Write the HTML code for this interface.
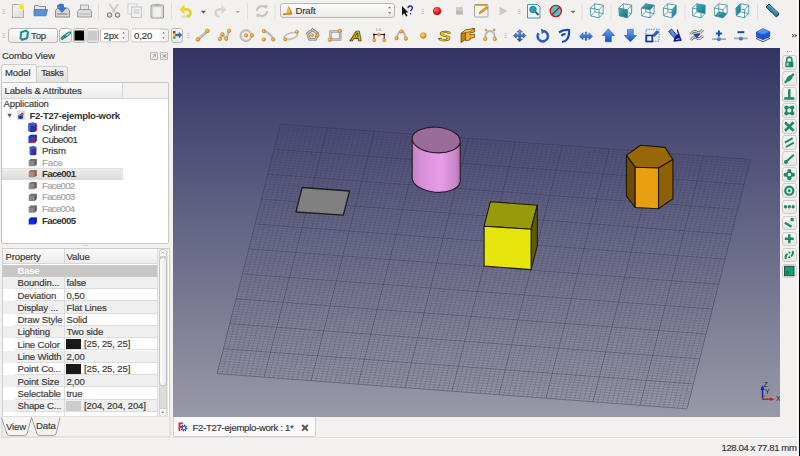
<!DOCTYPE html>
<html><head><meta charset="utf-8">
<style>
*{box-sizing:border-box;margin:0;padding:0}
html,body{width:800px;height:456px;overflow:hidden;background:#f2f1f0;font-family:"Liberation Sans",sans-serif;color:#3c3c3c}
.a{position:absolute}
.t{position:absolute;white-space:pre;font-size:9.6px;letter-spacing:-0.15px;line-height:12px;-webkit-text-stroke:0.18px currentColor}
.b{font-weight:bold;letter-spacing:-0.3px;-webkit-text-stroke:0}
.g{color:#a3a3a3}
.row{position:absolute;left:15px;width:142px;height:12.2px;border-bottom:1px solid #dedede}
.ic{position:absolute}
</style></head><body>
<svg class="a" style="left:0;top:0" width="800" height="48" viewBox="0 0 800 48">
<defs>
<linearGradient id="pg" x1="0" y1="0" x2="1" y2="1"><stop offset="0" stop-color="#fafafa"/><stop offset="1" stop-color="#d8d8d8"/></linearGradient>
<linearGradient id="btn" x1="0" y1="0" x2="0" y2="1"><stop offset="0" stop-color="#fdfdfd"/><stop offset="1" stop-color="#ebe9e6"/></linearGradient>
<linearGradient id="teal" x1="0" y1="0" x2="1" y2="1"><stop offset="0" stop-color="#48b4c4"/><stop offset="1" stop-color="#0c6c7c"/></linearGradient>
<linearGradient id="blu" x1="0" y1="0" x2="0" y2="1"><stop offset="0" stop-color="#6aa8f0"/><stop offset="1" stop-color="#1050c0"/></linearGradient>
<radialGradient id="red" cx="0.4" cy="0.35" r="0.7"><stop offset="0" stop-color="#ff7070"/><stop offset="0.6" stop-color="#e41b1b"/><stop offset="1" stop-color="#b00000"/></radialGradient>
<radialGradient id="dot" cx="0.35" cy="0.35" r="0.7"><stop offset="0" stop-color="#ffd070"/><stop offset="1" stop-color="#e08a00"/></radialGradient>
</defs>
<!-- grips row1 -->
<g stroke="#bcbab6" stroke-width="0.8"><path d="M2.5 9.5h2.5M2.5 11.5h2.5M2.5 13.5h2.5"/></g>
<!-- New -->
<rect x="12.5" y="4.5" width="11" height="13" fill="url(#pg)" stroke="#b0b0b0"/>
<circle cx="21.5" cy="7" r="3.4" fill="#ffff80" opacity="0.6"/><circle cx="21.5" cy="7" r="2.4" fill="#f0e830"/>
<!-- Open -->
<path d="M34.5 5.5h4l1 1h6v8h-11z" fill="#e8e8e8" stroke="#8c8c8c"/>
<path d="M34 9.5h13.5l-1.5 6.3h-12z" fill="#5a8fd0" stroke="#3a6aa8" stroke-width="0.7"/>
<!-- Save -->
<path d="M55.5 10.5l2-2.5h10l2 2.5v6.5h-14z" fill="#d8d8d8" stroke="#8a8a8a"/>
<rect x="57" y="13" width="10.5" height="2" fill="#a8a8a8"/>
<path d="M57.5 5.5c1.5-1.5 4-2 6-1l0 3.5 2.5 0-4 4.5-4-4.5 2.5 0 0-1.5c-1 0-2 0.2-3 1z" fill="#3a78cc" stroke="#1c4c98" stroke-width="0.5"/>
<!-- Print -->
<rect x="80.5" y="5" width="8" height="6" fill="#e4e4e4" stroke="#a8a8a8"/>
<path d="M77.5 11.5l1.5-2h11l1.5 2v5.5h-14z" fill="#dcdcdc" stroke="#9a9a9a"/>
<rect x="79" y="13.5" width="10.5" height="1" fill="#b4b4b4"/>
<!-- sep -->
<path d="M98.5 3v16" stroke="#e2e0dc"/>
<!-- Cut -->
<g fill="none" stroke="#c8c8c8" stroke-width="1.6"><path d="M109.5 4l5.5 8.5M118 4l-5.5 8.5"/></g><g fill="none" stroke="#8a8a8a" stroke-width="1.3"><circle cx="109.5" cy="15" r="2.1"/><circle cx="117.5" cy="15" r="2.1"/></g>
<!-- Copy -->
<rect x="128" y="4" width="9" height="10" fill="#f4f4f4" stroke="#d0d0d0"/>
<rect x="131.5" y="7" width="10" height="10.5" fill="#f0f0f0" stroke="#c4c4c4"/>
<rect x="133.5" y="9" width="6" height="5" fill="#dcdcdc"/>
<!-- Paste -->
<rect x="151" y="5" width="12.5" height="13" rx="1" fill="#dcdcdc" stroke="#9a9a9a"/>
<path d="M152.8 6.8h9v9l-2 1.5h-7z" fill="#f0f0f0" stroke="#c0c0c0" stroke-width="0.5"/>
<rect x="154.5" y="3.8" width="5.5" height="2.4" rx="0.8" fill="#b0b0b0"/>
<!-- sep -->
<path d="M171.5 3v16" stroke="#e2e0dc"/>
<!-- Undo -->
<ellipse cx="186" cy="16.5" rx="5" ry="1.5" fill="#d8d6d2" opacity="0.7"/>
<path d="M183.5 9.5c4.5-1 7 1 7 3.5s-2 3.5-4 3.2" fill="none" stroke="#e6d020" stroke-width="2.6"/>
<path d="M179.5 9.5l5-5v10z" fill="#ecd828"/>
<path d="M201 10.8h5l-2.5 2.7z" fill="#555"/>
<!-- Redo faded -->
<path d="M222.5 9.5c-4.5-1-7 1-7 3.5s2 3.5 4 3.2" fill="none" stroke="#d4d4d4" stroke-width="2.6"/>
<path d="M226.5 9.5l-5-5v10z" fill="#d8d8d8"/>
<path d="M235.6 11h4.4l-2.2 2.3z" fill="#a8a8a8"/>
<path d="M247.5 3v16" stroke="#e2e0dc"/>
<!-- Refresh -->
<g fill="none" stroke="#c4c4c4" stroke-width="2"><path d="M257 11a5 5 0 0 1 9-3"/><path d="M267 11a5 5 0 0 1-9 3"/></g>
<path d="M264 5l3.5 0 0 4z" fill="#c4c4c4"/><path d="M260 17l-3.5 0 0-4z" fill="#c4c4c4"/>
<path d="M275 3v16" stroke="#e2e0dc"/>
<!-- Draft combo -->
<rect x="280.5" y="3.5" width="114" height="14" rx="2.5" fill="url(#btn)" stroke="#b9b7b3"/>
<path d="M283 13.5l9-0.5 0 1.5-9 0.5z" fill="#c47a10"/><path d="M286 13l2.5-7.5 3.5 7.5z" fill="#e8c040"/><path d="M288.5 5.5l3.5 7.5h-1.5z" fill="#b08020"/>
<path d="M388 8.2l1.6-1.8 1.6 1.8z" fill="#707070"/><path d="M388 12.3l1.6 1.8 1.6-1.8z" fill="#707070"/>
<!-- WhatsThis -->
<path d="M402 6l0 9.5 2.2-2.2 2 3.2 1.3-0.8-1.9-3.1 2.9-0.2z" fill="#111"/>
<path d="M408 8.2c0-1.5 1-2.2 2.2-2.2s2.2 0.8 2.2 2c0 1.6-1.8 1.8-1.8 3.3" fill="none" stroke="#1a2aa8" stroke-width="1.3"/><circle cx="410.6" cy="13.8" r="0.8" fill="#1a2aa8"/>
<!-- grip -->
<g stroke="#c4c2be" stroke-width="0.8"><path d="M421.5 9.5h2.5M421.5 11.5h2.5M421.5 13.5h2.5"/></g>
<!-- record -->
<circle cx="437" cy="11" r="4.1" fill="url(#red)"/>
<!-- stop -->
<rect x="456" y="7" width="7" height="7.4" fill="#cdcdcd"/><rect x="456" y="11" width="7" height="3.4" fill="#b8b8b8"/>
<!-- macro edit -->
<rect x="474.5" y="4.5" width="13.5" height="12.5" rx="1" fill="#f6f4ea" stroke="#a8a8a0"/>
<rect x="475" y="4" width="12.5" height="1.8" fill="#b8a040"/>
<path d="M479 14l1-2.5 6.5-5 1.5 1.5-6.5 5z" fill="#e8a030" stroke="#a06010" stroke-width="0.5"/>
<!-- play -->
<path d="M499.5 6.5l8 4.5-8 4.5z" fill="#cacaca"/>
<g stroke="#c4c2be" stroke-width="0.8"><path d="M518 9.5h2.5M518 11.5h2.5M518 13.5h2.5"/></g>
<!-- view fit -->
<path d="M527.5 4.5h10l2.5 2.5v11h-12.5z" fill="#f4f8f8" stroke="#4a9aa8"/>
<circle cx="533" cy="9.5" r="3.3" fill="#2aa0b8" stroke="#106878" stroke-width="0.6"/>
<path d="M535.5 12l3 3" stroke="#106878" stroke-width="1.8"/>
<!-- draw style -->
<circle cx="555.8" cy="11" r="5.2" fill="#40c8d8"/>
<circle cx="555.8" cy="11" r="5.6" fill="none" stroke="#c41818" stroke-width="1.4"/>
<path d="M552 14.8l7.6-7.6" stroke="#c41818" stroke-width="1.4"/>
<path d="M570.6 10.8h5l-2.5 2.7z" fill="#777"/>
<path d="M582 3v16" stroke="#e2e0dc"/>
<!-- cubes -->
<path d="M590.3 8.0L599.0 9.8L599.0 17.8L590.8 15.9zM590.3 8.0L599.0 9.8L603.2 5.2L594.8 3.8zM599.0 9.8L603.2 5.2L603.0 13.6L599.0 17.8z" fill="#fff" fill-opacity="0.85"/><path d="M590.3 8.0L599.0 9.8L599.0 17.8L590.8 15.9zM594.8 3.8L603.2 5.2L603.0 13.6L594.8 11.8zM590.3 8.0L594.8 3.8M599.0 9.8L603.2 5.2M599.0 17.8L603.0 13.6M590.8 15.9L594.8 11.8" fill="none" stroke="#3a8e9c" stroke-width="0.85"/><path d="M618.8 8.0L627.5 9.8L627.5 17.8L619.3 15.9zM618.8 8.0L627.5 9.8L631.7 5.2L623.3 3.8zM627.5 9.8L631.7 5.2L631.5 13.6L627.5 17.8z" fill="#fff" fill-opacity="0.85"/><path d="M618.8 8.0L627.5 9.8L627.5 17.8L619.3 15.9z" fill="url(#teal)"/><path d="M618.8 8.0L627.5 9.8L627.5 17.8L619.3 15.9zM623.3 3.8L631.7 5.2L631.5 13.6L623.3 11.8zM618.8 8.0L623.3 3.8M627.5 9.8L631.7 5.2M627.5 17.8L631.5 13.6M619.3 15.9L623.3 11.8" fill="none" stroke="#3a8e9c" stroke-width="0.85"/><path d="M641.3 8.0L650.0 9.8L650.0 17.8L641.8 15.9zM641.3 8.0L650.0 9.8L654.2 5.2L645.8 3.8zM650.0 9.8L654.2 5.2L654.0 13.6L650.0 17.8z" fill="#fff" fill-opacity="0.85"/><path d="M641.3 8.0L650.0 9.8L654.2 5.2L645.8 3.8z" fill="url(#teal)"/><path d="M641.3 8.0L650.0 9.8L650.0 17.8L641.8 15.9zM645.8 3.8L654.2 5.2L654.0 13.6L645.8 11.8zM641.3 8.0L645.8 3.8M650.0 9.8L654.2 5.2M650.0 17.8L654.0 13.6M641.8 15.9L645.8 11.8" fill="none" stroke="#3a8e9c" stroke-width="0.85"/><path d="M663.3 8.0L672.0 9.8L672.0 17.8L663.8 15.9zM663.3 8.0L672.0 9.8L676.2 5.2L667.8 3.8zM672.0 9.8L676.2 5.2L676.0 13.6L672.0 17.8z" fill="#fff" fill-opacity="0.85"/><path d="M672.0 9.8L676.2 5.2L676.0 13.6L672.0 17.8z" fill="url(#teal)"/><path d="M663.3 8.0L672.0 9.8L672.0 17.8L663.8 15.9zM667.8 3.8L676.2 5.2L676.0 13.6L667.8 11.8zM663.3 8.0L667.8 3.8M672.0 9.8L676.2 5.2M672.0 17.8L676.0 13.6M663.8 15.9L667.8 11.8" fill="none" stroke="#3a8e9c" stroke-width="0.85"/><path d="M692.3 8.0L701.0 9.8L701.0 17.8L692.8 15.9zM692.3 8.0L701.0 9.8L705.2 5.2L696.8 3.8zM701.0 9.8L705.2 5.2L705.0 13.6L701.0 17.8z" fill="#fff" fill-opacity="0.85"/><path d="M696.8 3.8L705.2 5.2L705.0 13.6L696.8 11.8z" fill="url(#teal)"/><path d="M692.3 8.0L701.0 9.8L701.0 17.8L692.8 15.9zM696.8 3.8L705.2 5.2L705.0 13.6L696.8 11.8zM692.3 8.0L696.8 3.8M701.0 9.8L705.2 5.2M701.0 17.8L705.0 13.6M692.8 15.9L696.8 11.8" fill="none" stroke="#3a8e9c" stroke-width="0.85"/><path d="M714.3 8.0L723.0 9.8L723.0 17.8L714.8 15.9zM714.3 8.0L723.0 9.8L727.2 5.2L718.8 3.8zM723.0 9.8L727.2 5.2L727.0 13.6L723.0 17.8z" fill="#fff" fill-opacity="0.85"/><path d="M714.8 15.9L723.0 17.8L727.0 13.6L718.8 11.8z" fill="url(#teal)"/><path d="M714.3 8.0L723.0 9.8L723.0 17.8L714.8 15.9zM718.8 3.8L727.2 5.2L727.0 13.6L718.8 11.8zM714.3 8.0L718.8 3.8M723.0 9.8L727.2 5.2M723.0 17.8L727.0 13.6M714.8 15.9L718.8 11.8" fill="none" stroke="#3a8e9c" stroke-width="0.85"/><path d="M735.9 8.0L744.6 9.8L744.6 17.8L736.4 15.9zM735.9 8.0L744.6 9.8L748.8 5.2L740.4 3.8zM744.6 9.8L748.8 5.2L748.6 13.6L744.6 17.8z" fill="#fff" fill-opacity="0.85"/><path d="M735.9 8.0L740.4 3.8L740.4 11.8L736.4 15.9z" fill="url(#teal)"/><path d="M735.9 8.0L744.6 9.8L744.6 17.8L736.4 15.9zM740.4 3.8L748.8 5.2L748.6 13.6L740.4 11.8zM735.9 8.0L740.4 3.8M744.6 9.8L748.8 5.2M744.6 17.8L748.6 13.6M736.4 15.9L740.4 11.8" fill="none" stroke="#3a8e9c" stroke-width="0.85"/>
<path d="M611 3v16" stroke="#e2e0dc"/>
<path d="M685 3v16" stroke="#e2e0dc"/>
<path d="M757.5 3v16" stroke="#e2e0dc"/>
<!-- measure -->
<path d="M766 7l3-3 10 9.5-3 3z" fill="#2a90a8" stroke="#102c38" stroke-width="0.9"/><path d="M767.5 6.5l1.5-1.5 8.5 8" stroke="#70d0e0" stroke-width="0.7" fill="none"/>
<path d="M776 16.5l3-3v1.5l-2.5 2.5z" fill="#1a4050"/>
<!-- grips row2 -->
<g stroke="#bcbab6" stroke-width="0.8"><path d="M2.5 33.5h2.5M2.5 35.5h2.5M2.5 37.5h2.5"/></g>
<!-- Top button -->
<rect x="8.5" y="28.5" width="49" height="14" rx="2.5" fill="url(#btn)" stroke="#bbb9b5"/>
<path d="M21.2 32.3l4.8-1.6 2 1.6-1 5.8-4.8 1.6-1.6-1.6z" fill="none" stroke="#1a9aa0" stroke-width="2.1"/>
<path d="M21.2 32.3l4.8-1.6 2 1.6-1 5.8-4.8 1.6-1.6-1.6z" fill="none" stroke="#0a5a60" stroke-width="0.6" stroke-dasharray="0.8 1.2"/>
<!-- link -->
<rect x="59.5" y="28.5" width="12" height="14" rx="2.5" fill="url(#btn)" stroke="#bbb9b5"/>
<path d="M62.2 38.2l3.8-2.6" stroke="#0e6a5c" stroke-width="3.2" stroke-linecap="round"/><path d="M62.2 38.2l3.8-2.6" stroke="#2aa898" stroke-width="2" stroke-linecap="round"/>
<path d="M65.5 35.8l4-2.8" stroke="#0e6a5c" stroke-width="3.2" stroke-linecap="round"/><path d="M65.5 35.8l4-2.8" stroke="#3cc0b0" stroke-width="2" stroke-linecap="round"/><path d="M66.3 35.2l2.6-1.8" stroke="#e0f8f0" stroke-width="0.7"/>
<!-- color buttons -->
<rect x="73.5" y="28.5" width="11.5" height="14" rx="2" fill="url(#btn)" stroke="#bbb9b5"/>
<rect x="74.5" y="30.5" width="9.5" height="10" fill="#000"/>
<rect x="87" y="28.5" width="11.5" height="14" rx="2" fill="url(#btn)" stroke="#bbb9b5"/>
<rect x="88" y="30.5" width="9.5" height="10" fill="#cacaca"/>
<!-- spinboxes -->
<rect x="100.5" y="29" width="28" height="12.8" rx="2" fill="#f4f3f1" stroke="#c2c0bc"/>
<rect x="101" y="29.5" width="18.5" height="11.8" fill="#fff"/>
<path d="M122.3 33.4l1.3-1.5 1.3 1.5zM122.3 37.6l1.3 1.5 1.3-1.5z" fill="#6a6a6a"/>
<rect x="131" y="29" width="37.5" height="12.8" rx="2" fill="#f4f3f1" stroke="#c2c0bc"/>
<rect x="131.5" y="29.5" width="28" height="11.8" fill="#fff"/>
<path d="M162.3 33.4l1.3-1.5 1.3 1.5zM162.3 37.6l1.3 1.5 1.3-1.5z" fill="#6a6a6a"/>
<!-- apply style -->
<rect x="171.5" y="28.5" width="11" height="14" rx="2.5" fill="url(#btn)" stroke="#bbb9b5"/>
<rect x="173" y="31" width="2.5" height="2.6" fill="#e82020"/><rect x="173" y="33.6" width="2.5" height="2.6" fill="#f0d020"/><rect x="173" y="36.2" width="2.5" height="2.6" fill="#30c030"/>
<path d="M175.5 34h3.5v-1.8l3 2.8-3 2.8v-1.8h-3.5z" fill="#2a70d8" stroke="#1848a0" stroke-width="0.4"/>
<g stroke="#c4c2be" stroke-width="0.8"><path d="M187 33.5h2.5M187 35.5h2.5M187 37.5h2.5"/></g>
<!-- Draft: line -->
<g fill="none" stroke="#c0c0c0" stroke-width="2.4">
<path d="M197.8 39.5L207.4 30.8"/>
<path d="M219.8 39L222.3 34.3L226.3 38.8L229 30.8"/>
<path d="M263.8 31.1Q271 33 273.2 39.5"/>
</g>
<g fill="none" stroke="#8a8a8a" stroke-width="0.6">
<path d="M198.5 40.5L208.4 31.5"/>
</g>
<circle cx="246" cy="35.6" r="5.2" fill="none" stroke="#c8c8c8" stroke-width="2"/>
<circle cx="246" cy="35.6" r="6" fill="none" stroke="#9a9a9a" stroke-width="0.5"/>
<ellipse cx="290.8" cy="36" rx="6.8" ry="3" transform="rotate(-15 290.8 36)" fill="none" stroke="#c4c4c4" stroke-width="1.8"/>
<path d="M307.6 33.5l5-3.8 5 3.8-1.9 5.8h-6.2z" fill="none" stroke="#707070" stroke-width="2.6"/><path d="M307.6 33.5l5-3.8 5 3.8-1.9 5.8h-6.2z" fill="none" stroke="#c0c0c0" stroke-width="1.4"/>
<rect x="330.5" y="31.5" width="9.8" height="8" fill="none" stroke="#8a8a8a" stroke-width="2.2"/><rect x="330.5" y="31.5" width="9.8" height="8" fill="none" stroke="#c4c4c4" stroke-width="1"/>
<g fill="none" stroke="#b8b8b8" stroke-width="2"><path d="M396.5 38.1Q399 30 401.4 31.5Q404 30 405.9 38.7"/>
<path d="M485.2 39Q485 31 490 31Q495 31 494.8 39"/></g>
<text x="0" y="0" transform="translate(350.3 40.6) scale(1.15 1)" font-family="Liberation Sans" font-weight="bold" font-style="italic" font-size="14.5" fill="#f4d000" stroke="#2a2400" stroke-width="0.7">A</text>
<text x="0" y="0" transform="translate(438.2 40.6) scale(1.35 1)" font-family="Liberation Sans" font-weight="bold" font-style="italic" font-size="14" fill="#f0cc00" stroke="#403800" stroke-width="0.45">S</text>
<!-- dimension -->
<path d="M374 34.5h10.2M374 34.5v5.7M384.2 34.5v5.7" stroke="#222" stroke-width="1"/>
<text x="375.5" y="31" font-family="Liberation Sans" font-size="4" fill="#888">1.6</text>
<!-- facebinder -->
<path d="M461 33.5l4.5-3.5v9.5l-4.5 3z" fill="#c88000" stroke="#3a2800" stroke-width="0.6"/>
<path d="M465.5 30l9-1.5v3.5l-4.5 1v2l4.5-1v3.5l-4.5 1v1.5l-4.5 0.8z" fill="#f8b020" stroke="#3a2800" stroke-width="0.6"/>
<path d="M461 33.5l4.5-3.5 9-1.5-4.5 3.2z" fill="#ffd060" stroke="#3a2800" stroke-width="0.5"/>
<!-- dots -->
<g fill="url(#dot)" stroke="#b06800" stroke-width="0.4">
<circle cx="197.8" cy="39.5" r="1.9"/><circle cx="207.4" cy="30.8" r="1.9"/>
<circle cx="219.8" cy="39" r="1.8"/><circle cx="222.3" cy="34.3" r="1.8"/><circle cx="226.3" cy="38.8" r="1.8"/><circle cx="229" cy="30.8" r="1.8"/>
<circle cx="246" cy="35.4" r="1.8"/><circle cx="251.9" cy="35.4" r="1.8"/>
<circle cx="263.8" cy="31.1" r="1.8"/><circle cx="263.8" cy="39.5" r="1.8"/><circle cx="273.2" cy="39.5" r="1.8"/>
<circle cx="285.2" cy="39.5" r="1.6"/><circle cx="296.9" cy="31.8" r="1.6"/>
<circle cx="312" cy="35" r="1.7"/><circle cx="317.4" cy="35.4" r="1.7"/>
<circle cx="329.8" cy="39.8" r="1.8"/><circle cx="339.9" cy="30.8" r="1.8"/>
<circle cx="379" cy="34.5" r="1.6"/><circle cx="374.2" cy="40.2" r="1.6"/><circle cx="384.2" cy="40.2" r="1.6"/>
<circle cx="396.5" cy="38.1" r="1.8"/><circle cx="401.4" cy="31.5" r="1.8"/><circle cx="405.9" cy="38.7" r="1.8"/>
<circle cx="423.3" cy="35.6" r="2.9"/>
<circle cx="485.9" cy="29.9" r="1"/><circle cx="494.2" cy="29.9" r="1"/><circle cx="485.2" cy="39" r="1.8"/><circle cx="494.8" cy="39" r="1.8"/>
</g>
<circle cx="374" cy="34.5" r="1" fill="#111"/><circle cx="384.2" cy="34.5" r="1" fill="#111"/>
<g stroke="#c4c2be" stroke-width="0.8"><path d="M504.5 33.5h2.5M504.5 35.5h2.5M504.5 37.5h2.5"/></g>
<!-- blue tools -->
<g fill="url(#blu)" stroke="#1a3c90" stroke-width="0.5">
<path d="M519.70 29.40L522.40 32.10L520.55 32.10L520.55 34.75L523.20 34.75L523.20 32.90L525.90 35.60L523.20 38.30L523.20 36.45L520.55 36.45L520.55 39.10L522.40 39.10L519.70 41.80L517.00 39.10L518.85 39.10L518.85 36.45L516.20 36.45L516.20 38.30L513.50 35.60L516.20 32.90L516.20 34.75L518.85 34.75L518.85 32.10L517.00 32.10z"/>
<path d="M602.2 35.5l6.2-6.7 6.2 6.7h-3.3v6.3h-5.8v-6.3z"/>
<path d="M624.2 35.5l6.2 6.3 6.2-6.3h-3.3v-6.1h-5.8v6.1z"/>
<path d="M579.5 36.2l3.5-3.5v2.2h2.3v-2.8h1.4v2.8h2.3v-2.2l3.5 3.5-3.5 3.5v-2.2h-2.3v2.8h-1.4v-2.8h-2.3v2.2z"/>
</g>
<path d="M538.5 33.2a5.2 5.2 0 1 0 5-2.2" fill="none" stroke="#2a5cc8" stroke-width="2.6"/>
<path d="M541 28.6l4.5 2.4-3.8 3.2z" fill="#2a5cc8"/>
<path d="M559 32.5q4-3 10-2.5 0.5 6-2 9.5-2 2-5 2.5M561.5 36q2-2.5 4-1.5" fill="none" stroke="#1c48b0" stroke-width="2.2"/>
<!-- scale -->
<rect x="646" y="29.3" width="13" height="12" fill="none" stroke="#4a8af0" stroke-width="1.1" stroke-dasharray="1.5 1"/>
<rect x="646.3" y="35.5" width="6" height="6" fill="#fff" stroke="#1a3c90" stroke-width="1.8"/>
<path d="M652.5 35l4.5-4.5 1.8 1.8-4.5 4.5z" fill="#2a60d0" stroke="#103080" stroke-width="0.5"/>
<!-- shape2dview -->
<path d="M668.5 31.5l3-2.5 6.5 7.5-2.8 2.5z" fill="#4a80e0" stroke="#0a1a60" stroke-width="0.7"/>
<path d="M671 30.5l2 2M672.5 33l1.5 1.5" stroke="#c0d8ff" stroke-width="0.6"/>
<path d="M675.5 36.5l2.8-2.5-1-4.5 4 11-7.5 0.8z" fill="#0a18c0" stroke="#000850" stroke-width="0.7"/>
<path d="M676 39.5l3.5-0.8" stroke="#fff" stroke-width="0.8"/>
<!-- wire2spline -->
<g fill="none" stroke="#606060" stroke-width="2.6"><path d="M690.8 34q3-4 6-2t6-2"/><path d="M690.8 40q3-4 6-2t6-2"/></g>
<g fill="none" stroke="#d0d0d0" stroke-width="1.4"><path d="M690.8 34q3-4 6-2t6-2"/><path d="M690.8 40q3-4 6-2t6-2"/></g>
<path d="M693.5 34h6.5l-3.2 4z" fill="#1a50c8" stroke="#0a2070" stroke-width="0.5"/>
<!-- addpoint/delpoint -->
<path d="M712.2 39.1h13.8M734 38.4h13.8" stroke="#a8a8a8" stroke-width="1.8"/>
<path d="M718.9 30.5v6M715.9 33.5h6" stroke="#1a48c0" stroke-width="2"/>
<path d="M737.5 32.2h6.8" stroke="#1a48c0" stroke-width="2"/>
<circle cx="718.9" cy="39.1" r="2" fill="url(#blu)"/><circle cx="740.9" cy="38.4" r="2" fill="url(#blu)"/>
<!-- wp proxy -->
<path d="M756 38.5l7-3 7 3-7 3.3z" fill="#d8d8d8" stroke="#505050" stroke-width="0.9"/>
<path d="M756.5 32l6.5-3.2 6.8 2.8v5l-6.8 3-6.5-2.8z" fill="#1a5ae0" stroke="#102c80" stroke-width="0.6"/>
<path d="M756.5 32l6.5-3.2 6.8 2.8-6.8 3z" fill="#5090f8"/>
<path d="M763 34.6v5" stroke="#102c80" stroke-width="0.5"/>
<!-- chevron -->
<path d="M792 34.3l2 1.35-2 1.35M794.5 34.3l2 1.35-2 1.35" fill="none" stroke="#333" stroke-width="0.9"/>
</svg>

<!-- 3D view -->
<svg class="a" style="left:173px;top:48px" width="607" height="369" viewBox="0 0 607 369">
<defs><linearGradient id="bg" x1="0" y1="0" x2="0" y2="1"><stop offset="0" stop-color="#333365"/><stop offset="1" stop-color="#9999a8"/></linearGradient></defs>
<rect width="607" height="369" fill="url(#bg)"/>
<linearGradient id="gmin" gradientUnits="userSpaceOnUse" x1="0" y1="76" x2="0" y2="361"><stop offset="0" stop-color="#2a2a48" stop-opacity="0.16"/><stop offset="1" stop-color="#2a2a48" stop-opacity="0.22"/></linearGradient>
<linearGradient id="gmaj" gradientUnits="userSpaceOnUse" x1="0" y1="76" x2="0" y2="361"><stop offset="0" stop-color="#28284a" stop-opacity="0.34"/><stop offset="1" stop-color="#28284a" stop-opacity="0.4"/></linearGradient>
<path d="M112.2 76.7L48.8 326.0M106.9 78.8L576.8 114.0M116.9 77.0L53.5 326.3M106.2 81.3L576.1 116.5M121.6 77.4L58.2 326.7M105.6 83.8L575.5 119.0M126.3 77.7L62.9 327.0M105.0 86.3L574.9 121.5M131.0 78.1L67.6 327.4M104.3 88.8L574.2 124.0M135.7 78.4L72.3 327.7M103.7 91.3L573.6 126.5M140.4 78.8L77.0 328.1M103.1 93.8L573.0 129.0M145.1 79.1L81.7 328.4M102.4 96.2L572.3 131.4M149.8 79.5L86.4 328.8M101.8 98.7L571.7 133.9M159.2 80.2L95.8 329.5M100.5 103.7L570.4 138.9M163.9 80.5L100.5 329.8M99.9 106.2L569.8 141.4M168.6 80.9L105.2 330.2M99.3 108.7L569.2 143.9M173.3 81.2L109.9 330.5M98.6 111.2L568.5 146.4M178.0 81.6L114.6 330.9M98.0 113.7L567.9 148.9M182.7 81.9L119.3 331.2M97.4 116.2L567.3 151.4M187.4 82.3L124.0 331.6M96.7 118.7L566.6 153.9M192.1 82.6L128.7 331.9M96.1 121.2L566.0 156.4M196.8 83.0L133.4 332.3M95.5 123.7L565.4 158.9M206.2 83.7L142.8 333.0M94.2 128.7L564.1 163.9M210.9 84.0L147.5 333.3M93.6 131.1L563.5 166.3M215.6 84.4L152.2 333.7M92.9 133.6L562.8 168.8M220.3 84.7L156.9 334.0M92.3 136.1L562.2 171.3M225.0 85.1L161.6 334.4M91.7 138.6L561.5 173.8M229.7 85.5L166.3 334.8M91.0 141.1L560.9 176.3M234.4 85.8L171.0 335.1M90.4 143.6L560.3 178.8M239.1 86.2L175.7 335.5M89.7 146.1L559.6 181.3M243.8 86.5L180.4 335.8M89.1 148.6L559.0 183.8M253.2 87.2L189.8 336.5M87.8 153.6L557.7 188.8M257.9 87.6L194.5 336.9M87.2 156.1L557.1 191.3M262.6 87.9L199.2 337.2M86.6 158.6L556.5 193.8M267.3 88.3L203.9 337.6M85.9 161.1L555.8 196.3M272.0 88.6L208.6 337.9M85.3 163.6L555.2 198.8M276.7 89.0L213.3 338.3M84.7 166.0L554.6 201.2M281.4 89.3L218.0 338.6M84.0 168.5L553.9 203.7M286.1 89.7L222.7 339.0M83.4 171.0L553.3 206.2M290.8 90.0L227.4 339.3M82.8 173.5L552.7 208.7M300.2 90.7L236.8 340.0M81.5 178.5L551.4 213.7M304.9 91.1L241.5 340.4M80.9 181.0L550.8 216.2M309.6 91.4L246.2 340.7M80.2 183.5L550.1 218.7M314.3 91.8L250.9 341.1M79.6 186.0L549.5 221.2M319.0 92.1L255.6 341.4M79.0 188.5L548.9 223.7M323.7 92.5L260.3 341.8M78.3 191.0L548.2 226.2M328.4 92.8L265.0 342.1M77.7 193.5L547.6 228.7M333.1 93.2L269.7 342.5M77.1 196.0L547.0 231.2M337.8 93.5L274.4 342.8M76.4 198.5L546.3 233.7M347.1 94.3L283.7 343.6M75.2 203.4L545.1 238.6M351.8 94.6L288.4 343.9M74.5 205.9L544.4 241.1M356.5 95.0L293.1 344.3M73.9 208.4L543.8 243.6M361.2 95.3L297.8 344.6M73.3 210.9L543.2 246.1M365.9 95.7L302.5 345.0M72.6 213.4L542.5 248.6M370.6 96.0L307.2 345.3M72.0 215.9L541.9 251.1M375.3 96.4L311.9 345.7M71.4 218.4L541.3 253.6M380.0 96.7L316.6 346.0M70.7 220.9L540.6 256.1M384.7 97.1L321.3 346.4M70.1 223.4L540.0 258.6M394.1 97.8L330.7 347.1M68.8 228.4L538.7 263.6M398.8 98.1L335.4 347.4M68.2 230.9L538.1 266.1M403.5 98.5L340.1 347.8M67.6 233.4L537.5 268.6M408.2 98.8L344.8 348.1M66.9 235.9L536.8 271.1M412.9 99.2L349.5 348.5M66.3 238.3L536.2 273.5M417.6 99.5L354.2 348.8M65.7 240.8L535.6 276.0M422.3 99.9L358.9 349.2M65.0 243.3L534.9 278.5M427.0 100.2L363.6 349.5M64.4 245.8L534.3 281.0M431.7 100.6L368.3 349.9M63.8 248.3L533.7 283.5M441.1 101.3L377.7 350.6M62.5 253.3L532.4 288.5M445.8 101.6L382.4 350.9M61.9 255.8L531.8 291.0M450.5 102.0L387.1 351.3M61.2 258.3L531.1 293.5M455.2 102.3L391.8 351.6M60.6 260.8L530.5 296.0M459.9 102.7L396.5 352.0M59.9 263.3L529.9 298.5M464.6 103.1L401.2 352.4M59.3 265.8L529.2 301.0M469.3 103.4L405.9 352.7M58.7 268.3L528.6 303.5M474.0 103.8L410.6 353.1M58.0 270.8L527.9 306.0M478.7 104.1L415.3 353.4M57.4 273.2L527.3 308.4M488.1 104.8L424.7 354.1M56.1 278.2L526.0 313.4M492.8 105.2L429.4 354.5M55.5 280.7L525.4 315.9M497.5 105.5L434.1 354.8M54.9 283.2L524.8 318.4M502.2 105.9L438.8 355.2M54.2 285.7L524.1 320.9M506.9 106.2L443.5 355.5M53.6 288.2L523.5 323.4M511.6 106.6L448.2 355.9M53.0 290.7L522.9 325.9M516.3 106.9L452.9 356.2M52.3 293.2L522.2 328.4M521.0 107.3L457.6 356.6M51.7 295.7L521.6 330.9M525.7 107.6L462.3 356.9M51.1 298.2L521.0 333.4M535.1 108.3L471.7 357.6M49.8 303.2L519.7 338.4M539.8 108.7L476.4 358.0M49.2 305.7L519.1 340.9M544.5 109.0L481.1 358.3M48.5 308.1L518.4 343.3M549.2 109.4L485.8 358.7M47.9 310.6L517.8 345.8M553.9 109.7L490.5 359.0M47.3 313.1L517.2 348.3M558.6 110.1L495.2 359.4M46.6 315.6L516.5 350.8M563.3 110.4L499.9 359.7M46.0 318.1L515.9 353.3M568.0 110.8L504.6 360.1M45.4 320.6L515.3 355.8M572.7 111.1L509.3 360.4M44.7 323.1L514.6 358.3" stroke="url(#gmin)" stroke-width="0.8" fill="none"/>
<path d="M107.5 76.3L44.1 325.6M107.5 76.3L577.4 111.5M154.5 79.8L91.1 329.1M101.2 101.2L571.1 136.4M201.5 83.3L138.1 332.6M94.8 126.2L564.7 161.4M248.5 86.9L185.1 336.2M88.5 151.1L558.4 186.3M295.5 90.4L232.1 339.7M82.1 176.0L552.0 211.2M342.4 93.9L279.0 343.2M75.8 200.9L545.7 236.2M389.4 97.4L326.0 346.7M69.5 225.9L539.4 261.1M436.4 100.9L373.0 350.2M63.1 250.8L533.0 286.0M483.4 104.5L420.0 353.8M56.8 275.7L526.7 310.9M530.4 108.0L467.0 357.3M50.4 300.7L520.3 335.9M577.4 111.5L514.0 360.8M44.1 325.6L514.0 360.8" stroke="url(#gmaj)" stroke-width="1" fill="none"/>
<defs><linearGradient id="cyl" x1="0" y1="0" x2="1" y2="0"><stop offset="0" stop-color="#c080c0"/><stop offset="0.15" stop-color="#d48ed4"/><stop offset="0.6" stop-color="#e89ce8"/><stop offset="0.9" stop-color="#c888c8"/><stop offset="1" stop-color="#b070b0"/></linearGradient></defs>
<polygon points="129.1,139.5 176.5,143.0 170.3,167.1 123.0,164.0" fill="#808080" stroke="#1e1e1e" stroke-width="1.3" stroke-linejoin="round"/>
<polygon points="317.4,153.7 364.3,157.2 358.1,181.2 311.1,178.2" fill="#999a0a" stroke="#1e1e10" stroke-width="1.1" stroke-linejoin="round"/>
<polygon points="364.3,157.2 364.3,197.9 358.1,221.6 358.1,181.2" fill="#5c5c00" stroke="#1e1e10" stroke-width="1.1" stroke-linejoin="round"/>
<polygon points="311.1,178.2 358.1,181.2 358.1,221.6 311.1,218.0" fill="#e6e60c" stroke="#1e1e10" stroke-width="1.1" stroke-linejoin="round"/>
<polygon points="453.4,107.4 467.4,97.3 492.0,99.4 499.9,111.6 485.5,120.0 462.2,119.2" fill="#986808" stroke="#20180a" stroke-width="1.1" stroke-linejoin="round"/>
<polygon points="453.4,107.4 462.2,119.2 462.2,159.5 453.4,148.1" fill="#6e4a06" stroke="#20180a" stroke-width="1.1" stroke-linejoin="round"/>
<polygon points="485.5,120.0 499.9,111.6 499.9,150.8 485.5,160.8" fill="#8e6008" stroke="#20180a" stroke-width="1.1" stroke-linejoin="round"/>
<polygon points="462.2,119.2 485.5,120.0 485.5,160.8 462.2,159.5" fill="#e8a010" stroke="#20180a" stroke-width="1.1" stroke-linejoin="round"/>
<path d="M239.2 90.1L239.2 130.1A24.1 12.8 4.5 0 0 287.2 133.9L287.2 93.9A24.1 12.8 4.5 0 1 239.2 90.1z" fill="url(#cyl)" stroke="#2a1a2a" stroke-width="1.1"/>
<ellipse cx="263.2" cy="92.0" rx="24.1" ry="12.8" transform="rotate(4.5 263.2 92.0)" fill="#9a6c9a" stroke="#2a1a2a" stroke-width="1.1"/>
<!-- axis -->
<path d="M589.5 350.5v-12" stroke="#2020c0" stroke-width="1.6"/>
<path d="M587.5 342l2-5 2 5z" fill="#2020c0"/>
<path d="M590 350.5l1.5-3" stroke="#20a020" stroke-width="1.6"/>
<path d="M589 351.2h11" stroke="#c02020" stroke-width="1.4"/>
<path d="M597 349.5l4.5 1.7-4.5 1.7z" fill="#c02020"/>
<g font-family="Liberation Sans" font-size="7" fill="#202020"><text x="590.5" y="339">Z</text><text x="592" y="346">Y</text><text x="603" y="352.5">X</text></g>

</svg>

<div class="t" style="left:295.5px;top:4.5px">Draft</div>
<div class="t" style="left:103.5px;top:29.5px">2px</div>
<div class="t" style="left:134px;top:29.5px">0,20</div>
<div class="t" style="left:31px;top:30px">Top</div>
<!-- ===== combo view ===== -->
<div class="t" style="left:2px;top:50px">Combo View</div>
<div class="a" style="left:150px;top:52px;width:8px;height:8px;border:1px solid #b8b8b8;border-radius:1px;background:#ececec"></div>
<div class="a" style="left:160px;top:52px;width:8px;height:8px;border:1px solid #b8b8b8;border-radius:1px;background:#ececec"></div>
<!-- tabs -->
<div class="a" style="left:36px;top:66px;width:32px;height:16px;border:1px solid #cfcdc9;border-bottom:none;border-radius:3px 3px 0 0;background:linear-gradient(#f2f1f0,#e3e1dd)"></div>
<div class="a" style="left:1px;top:64px;width:36px;height:19px;border:1px solid #cfcdc9;border-bottom:none;border-radius:3px 3px 0 0;background:#f7f6f5"></div>
<div class="t" style="left:5px;top:66.5px">Model</div>
<div class="t" style="left:41px;top:67.3px;letter-spacing:-0.45px">Tasks</div>
<!-- tree frame -->
<div class="a" style="left:1px;top:82px;width:167.5px;height:161.5px;border:1px solid #c8c6c2;border-radius:2px;background:#fff"></div>
<div class="a" style="left:2px;top:83px;width:121px;height:16px;background:linear-gradient(#fbfbfb,#ececec);border-right:1px solid #d6d6d6;border-bottom:1px solid #d6d6d6"></div>
<div class="a" style="left:123px;top:83px;width:44.5px;height:16px;background:#f2f1f0;border-bottom:1px solid #d6d6d6"></div>
<div class="t" style="left:4.5px;top:85px">Labels &amp; Attributes</div>
<div class="a" style="left:2px;top:167.7px;width:121px;height:12.1px;background:linear-gradient(#eeedeb,#dbdad7);border-top:1px solid #e2e1de"></div>
<div class="t" style="left:3.5px;top:98px">Application</div>
<div class="t b" style="left:29.5px;top:110px;color:#333">F2-T27-ejemplo-work</div>
<div class="t" style="left:42px;top:122px">Cylinder</div>
<div class="t" style="left:42px;top:133.5px;letter-spacing:-0.5px">Cube001</div>
<div class="t" style="left:42px;top:145px">Prism</div>
<div class="t g" style="left:42px;top:156.5px">Face</div>
<div class="t b" style="left:42px;top:168px;color:#333;letter-spacing:-0.65px">Face001</div>
<div class="t g" style="left:42px;top:179.5px;letter-spacing:-0.7px">Face002</div>
<div class="t g" style="left:42px;top:191px;letter-spacing:-0.7px">Face003</div>
<div class="t g" style="left:42px;top:203px;letter-spacing:-0.7px">Face004</div>
<div class="t b" style="left:42px;top:214.5px;color:#333;letter-spacing:-0.65px">Face005</div>

<!-- splitter -->
<div class="a" style="left:82.5px;top:244.5px;width:5px;height:2px;border-top:1px dotted #c4c4c4"></div>

<!-- property table -->
<div class="a" style="left:2px;top:248px;width:168px;height:170px;border:1px solid #cfcdc9;background:#fff"></div>
<div class="a" style="left:3px;top:249px;width:154px;height:15px;background:linear-gradient(#fbfbfb,#ececec);border-bottom:1px solid #d6d6d6"></div>
<div class="a" style="left:64px;top:249px;width:1px;height:15px;background:#d6d6d6"></div>
<div class="t" style="left:5.5px;top:250.5px">Property</div>
<div class="t" style="left:66.5px;top:250.5px">Value</div>
<div class="a" style="left:3px;top:264.5px;width:154px;height:12px;background:#c8c7c5"></div>
<div class="t b" style="left:17.5px;top:264.5px;color:#fff">Base</div>
<div class="a" style="left:3px;top:276.70px;width:154px;height:12.30px;background:#efefef;overflow:hidden"><div class="a" style="left:12px;top:11.30px;width:142px;height:1px;background:#dcdcdc"></div><div class="a" style="left:61px;top:0;width:1px;height:12.30px;background:#dcdcdc"></div><div class="t" style="left:14.5px;top:0.6px">Boundin...</div><div class="t" style="left:63.5px;top:0.6px">false</div></div>
<div class="a" style="left:3px;top:289.00px;width:154px;height:12.30px;background:#ffffff;overflow:hidden"><div class="a" style="left:12px;top:11.30px;width:142px;height:1px;background:#dcdcdc"></div><div class="a" style="left:61px;top:0;width:1px;height:12.30px;background:#dcdcdc"></div><div class="t" style="left:14.5px;top:0.6px">Deviation</div><div class="t" style="left:63.5px;top:0.6px">0,50</div></div>
<div class="a" style="left:3px;top:301.30px;width:154px;height:12.30px;background:#efefef;overflow:hidden"><div class="a" style="left:12px;top:11.30px;width:142px;height:1px;background:#dcdcdc"></div><div class="a" style="left:61px;top:0;width:1px;height:12.30px;background:#dcdcdc"></div><div class="t" style="left:14.5px;top:0.6px">Display ...</div><div class="t" style="left:63.5px;top:0.6px">Flat Lines</div></div>
<div class="a" style="left:3px;top:313.60px;width:154px;height:12.30px;background:#ffffff;overflow:hidden"><div class="a" style="left:12px;top:11.30px;width:142px;height:1px;background:#dcdcdc"></div><div class="a" style="left:61px;top:0;width:1px;height:12.30px;background:#dcdcdc"></div><div class="t" style="left:14.5px;top:0.6px">Draw Style</div><div class="t" style="left:63.5px;top:0.6px">Solid</div></div>
<div class="a" style="left:3px;top:325.90px;width:154px;height:12.30px;background:#efefef;overflow:hidden"><div class="a" style="left:12px;top:11.30px;width:142px;height:1px;background:#dcdcdc"></div><div class="a" style="left:61px;top:0;width:1px;height:12.30px;background:#dcdcdc"></div><div class="t" style="left:14.5px;top:0.6px">Lighting</div><div class="t" style="left:63.5px;top:0.6px">Two side</div></div>
<div class="a" style="left:3px;top:338.20px;width:154px;height:12.30px;background:#ffffff;overflow:hidden"><div class="a" style="left:12px;top:11.30px;width:142px;height:1px;background:#dcdcdc"></div><div class="a" style="left:61px;top:0;width:1px;height:12.30px;background:#dcdcdc"></div><div class="t" style="left:14.5px;top:0.6px">Line Color</div><div class="a" style="left:63px;top:1px;width:15px;height:10.3px;background:#191919"></div><div class="t" style="left:81px;top:0px">[25, 25, 25]</div></div>
<div class="a" style="left:3px;top:350.50px;width:154px;height:12.30px;background:#efefef;overflow:hidden"><div class="a" style="left:12px;top:11.30px;width:142px;height:1px;background:#dcdcdc"></div><div class="a" style="left:61px;top:0;width:1px;height:12.30px;background:#dcdcdc"></div><div class="t" style="left:14.5px;top:0.6px">Line Width</div><div class="t" style="left:63.5px;top:0.6px">2,00</div></div>
<div class="a" style="left:3px;top:362.80px;width:154px;height:12.30px;background:#ffffff;overflow:hidden"><div class="a" style="left:12px;top:11.30px;width:142px;height:1px;background:#dcdcdc"></div><div class="a" style="left:61px;top:0;width:1px;height:12.30px;background:#dcdcdc"></div><div class="t" style="left:14.5px;top:0.6px">Point Co...</div><div class="a" style="left:63px;top:1px;width:15px;height:10.3px;background:#191919"></div><div class="t" style="left:81px;top:0px">[25, 25, 25]</div></div>
<div class="a" style="left:3px;top:375.10px;width:154px;height:12.30px;background:#efefef;overflow:hidden"><div class="a" style="left:12px;top:11.30px;width:142px;height:1px;background:#dcdcdc"></div><div class="a" style="left:61px;top:0;width:1px;height:12.30px;background:#dcdcdc"></div><div class="t" style="left:14.5px;top:0.6px">Point Size</div><div class="t" style="left:63.5px;top:0.6px">2,00</div></div>
<div class="a" style="left:3px;top:387.40px;width:154px;height:12.30px;background:#ffffff;overflow:hidden"><div class="a" style="left:12px;top:11.30px;width:142px;height:1px;background:#dcdcdc"></div><div class="a" style="left:61px;top:0;width:1px;height:12.30px;background:#dcdcdc"></div><div class="t" style="left:14.5px;top:0.6px">Selectable</div><div class="t" style="left:63.5px;top:0.6px">true</div></div>
<div class="a" style="left:3px;top:399.70px;width:154px;height:12.30px;background:#efefef;overflow:hidden"><div class="a" style="left:12px;top:11.30px;width:142px;height:1px;background:#dcdcdc"></div><div class="a" style="left:61px;top:0;width:1px;height:12.30px;background:#dcdcdc"></div><div class="t" style="left:14.5px;top:0.6px">Shape C...</div><div class="a" style="left:63px;top:1px;width:15px;height:10.3px;background:#cccccc"></div><div class="t" style="left:81px;top:0px">[204, 204, 204]</div></div>
<div class="a" style="left:3px;top:412.00px;width:154px;height:4.50px;background:#ffffff;overflow:hidden"><div class="a" style="left:12px;top:11.30px;width:142px;height:1px;background:#dcdcdc"></div><div class="a" style="left:61px;top:0;width:1px;height:12.30px;background:#dcdcdc"></div><div class="t" style="left:14.5px;top:0.6px">T...</div><div class="t" style="left:63.5px;top:0.6px">0</div></div>
<!-- scrollbar -->
<div class="a" style="left:157px;top:249px;width:11px;height:168px;background:#f4f3f2;border-left:1px solid #dcdbd9;border-right:1px solid #e4e3e1"></div>
<div class="a" style="left:159px;top:249px;width:7.5px;height:167px;border:1px solid #d0cfcd;border-radius:3.5px;background:#dcdbd9"></div>
<div class="a" style="left:159px;top:249px;width:7.5px;height:8px;border:1px solid #d0cfcd;border-radius:3.5px 3.5px 0 0;background:#f6f6f6"></div>
<div class="a" style="left:159px;top:407.5px;width:7.5px;height:9px;border:1px solid #d0cfcd;border-radius:0 0 3.5px 3.5px;background:#f6f6f6"></div>
<div class="a" style="left:159px;top:256.5px;width:7.5px;height:129.5px;border:1px solid #c4c3c1;border-radius:3.5px;background:linear-gradient(90deg,#fafafa,#ebebeb)"></div>
<!-- bottom tabs -->
<svg class="a" style="left:0;top:416px" width="172" height="22">
<rect x="2" y="0" width="168" height="21" fill="#f2f1f0" stroke="#d4d2ce" stroke-width="1"/>
<path d="M31.5 1.5 L37 18 Q38 19.5 40 19.5 L53 19.5 Q55 19.5 56 18 L60 1.5" fill="#f2f1f0" stroke="#8e8c88" stroke-width="0.8"/>
<path d="M1.5 1.5 L7 18 Q8 19.5 10 19.5 L24 19.5 Q26 19.5 27 18 L31.5 1.5" fill="#f7f6f5" stroke="#8e8c88" stroke-width="0.8"/>
</svg>
<div class="t" style="left:6px;top:421px">View</div>
<div class="t" style="left:36px;top:420px">Data</div>

<!-- right toolbar -->
<div class="a" style="left:787px;top:50.5px;width:5px;height:2px;border-top:1px dotted #b0b0b0"></div>
<div class="a" style="left:782px;top:55.0px;width:14.5px;height:14.5px;border:1px solid #cfcdc9;border-radius:3px;background:linear-gradient(#f7f6f5,#e9e7e4)"></div>
<div class="a" style="left:782px;top:71.0px;width:14.5px;height:14.5px;border:1px solid #cfcdc9;border-radius:3px;background:linear-gradient(#f7f6f5,#e9e7e4)"></div>
<div class="a" style="left:782px;top:87.1px;width:14.5px;height:14.5px;border:1px solid #cfcdc9;border-radius:3px;background:linear-gradient(#f7f6f5,#e9e7e4)"></div>
<div class="a" style="left:782px;top:103.2px;width:14.5px;height:14.5px;border:1px solid #cfcdc9;border-radius:3px;background:linear-gradient(#f7f6f5,#e9e7e4)"></div>
<div class="a" style="left:782px;top:119.2px;width:14.5px;height:14.5px;border:1px solid #cfcdc9;border-radius:3px;background:linear-gradient(#f7f6f5,#e9e7e4)"></div>
<div class="a" style="left:782px;top:135.2px;width:14.5px;height:14.5px;border:1px solid #cfcdc9;border-radius:3px;background:linear-gradient(#f7f6f5,#e9e7e4)"></div>
<div class="a" style="left:782px;top:151.3px;width:14.5px;height:14.5px;border:1px solid #cfcdc9;border-radius:3px;background:linear-gradient(#f7f6f5,#e9e7e4)"></div>
<div class="a" style="left:782px;top:167.4px;width:14.5px;height:14.5px;border:1px solid #cfcdc9;border-radius:3px;background:linear-gradient(#f7f6f5,#e9e7e4)"></div>
<div class="a" style="left:782px;top:183.4px;width:14.5px;height:14.5px;border:1px solid #cfcdc9;border-radius:3px;background:linear-gradient(#f7f6f5,#e9e7e4)"></div>
<div class="a" style="left:782px;top:199.5px;width:14.5px;height:14.5px;border:1px solid #cfcdc9;border-radius:3px;background:linear-gradient(#f7f6f5,#e9e7e4)"></div>
<div class="a" style="left:782px;top:215.5px;width:14.5px;height:14.5px;border:1px solid #cfcdc9;border-radius:3px;background:linear-gradient(#f7f6f5,#e9e7e4)"></div>
<div class="a" style="left:782px;top:231.6px;width:14.5px;height:14.5px;border:1px solid #cfcdc9;border-radius:3px;background:linear-gradient(#f7f6f5,#e9e7e4)"></div>
<div class="a" style="left:782px;top:247.6px;width:14.5px;height:14.5px;border:1px solid #cfcdc9;border-radius:3px;background:linear-gradient(#f7f6f5,#e9e7e4)"></div>
<div class="a" style="left:782px;top:263.6px;width:14.5px;height:14.5px;border:1px solid #cfcdc9;border-radius:3px;background:linear-gradient(#f7f6f5,#e9e7e4)"></div>

<!-- doc tab -->
<div class="a" style="left:173px;top:417px;width:143px;height:20px;background:#fafafa;border:1px solid #d4d2ce;border-top:none;border-radius:0 0 2px 2px"></div>
<div class="t" style="left:192.5px;top:422px;letter-spacing:-0.3px">F2-T27-ejemplo-work : 1*</div>

<svg class="a" style="left:0;top:0" width="800" height="456" viewBox="0 0 800 456"><g transform="translate(789.3 62.3) scale(1.12) translate(-789.3 -62.3)"><path d="M787.0 61.8v-1.8a2.3 2.3 0 0 1 4.6 0v1.8" fill="none" stroke="#1e8a6c" stroke-width="1.4"/><rect x="785.6999999999999" y="61.5" width="7.2" height="5.2" rx="0.8" fill="#1e8a6c"/><rect x="786.8" y="62.5" width="2" height="3" fill="#8fd0bc"/></g><g transform="translate(789.3 78.35) scale(1.12) translate(-789.3 -78.35)"><path d="M785.3 82.35L793.3 74.35" stroke="#1e8a6c" stroke-width="2"/><ellipse cx="789.3" cy="78.35" rx="3.2" ry="2" transform="rotate(-45 789.3 78.35)" fill="#1e8a6c"/></g><g transform="translate(789.3 94.4) scale(1.12) translate(-789.3 -94.4)"><path d="M789.3 89.9v7.5M784.8 98.0h9" stroke="#1e8a6c" stroke-width="2.2"/></g><g transform="translate(789.3 110.45) scale(1.12) translate(-789.3 -110.45)"><g fill="#1e8a6c"><circle cx="786.6999999999999" cy="107.85000000000001" r="1.9"/><circle cx="791.9" cy="107.85000000000001" r="1.9"/><circle cx="786.6999999999999" cy="113.05" r="1.9"/><circle cx="791.9" cy="113.05" r="1.9"/></g><rect x="786.6999999999999" y="107.85000000000001" width="5.2" height="5.2" fill="none" stroke="#1e8a6c" stroke-width="1.6"/></g><g transform="translate(789.3 126.5) scale(1.12) translate(-789.3 -126.5)"><path d="M785.5 122.7L793.0999999999999 130.3M793.0999999999999 122.7L785.5 130.3" stroke="#1e8a6c" stroke-width="2.3"/></g><g transform="translate(789.3 142.55) scale(1.12) translate(-789.3 -142.55)"><path d="M785.3 142.55L792.3 138.55M786.3 146.55L793.3 142.55" stroke="#1e8a6c" stroke-width="1.7"/></g><g transform="translate(789.3 158.60000000000002) scale(1.12) translate(-789.3 -158.60000000000002)"><path d="M785.8 162.10000000000002L793.3 155.10000000000002" stroke="#1e8a6c" stroke-width="1.8"/><circle cx="786.3" cy="161.60000000000002" r="1.8" fill="#1e8a6c"/></g><g transform="translate(789.3 174.65) scale(1.12) translate(-789.3 -174.65)"><g fill="#1e8a6c"><circle cx="789.3" cy="171.35" r="1.8"/><circle cx="789.3" cy="177.95000000000002" r="1.8"/><circle cx="786.0" cy="174.65" r="1.8"/><circle cx="792.5999999999999" cy="174.65" r="1.8"/></g><circle cx="789.3" cy="174.65" r="2.3" fill="none" stroke="#1e8a6c" stroke-width="1.4"/></g><g transform="translate(789.3 190.7) scale(1.12) translate(-789.3 -190.7)"><circle cx="789.3" cy="190.7" r="3.6" fill="none" stroke="#1e8a6c" stroke-width="2"/><circle cx="789.3" cy="190.7" r="1.3" fill="#1e8a6c"/></g><g transform="translate(789.3 206.75) scale(1.12) translate(-789.3 -206.75)"><g fill="#1e8a6c"><circle cx="785.9" cy="206.75" r="1.5"/><circle cx="789.3" cy="206.75" r="1.5"/><circle cx="792.6999999999999" cy="206.75" r="1.5"/></g></g><g transform="translate(789.3 222.8) scale(1.12) translate(-789.3 -222.8)"><path d="M785.3 222.8L791.3 226.3" stroke="#1e8a6c" stroke-width="2.2"/><circle cx="791.8" cy="220.0" r="1.6" fill="#1e8a6c"/></g><g transform="translate(789.3 238.85000000000002) scale(1.12) translate(-789.3 -238.85000000000002)"><path d="M789.3 234.85000000000002v8M785.3 238.85000000000002h8" stroke="#1e8a6c" stroke-width="2.2"/></g><g transform="translate(789.3 254.90000000000003) scale(1.12) translate(-789.3 -254.90000000000003)"><path d="M786.3 258.40000000000003q-1-3 1.5-4.5M792.3 251.40000000000003q1 3-1.5 4.5" fill="none" stroke="#1e8a6c" stroke-width="1.8"/><path d="M788.3 251.90000000000003l2.5 0.5-1.8 2z" fill="#1e8a6c"/><path d="M790.3 257.90000000000003l-2.5-0.5 1.8-2z" fill="#1e8a6c"/></g><g transform="translate(789.3 270.95) scale(1.12) translate(-789.3 -270.95)"><rect x="785.0999999999999" y="266.75" width="8.4" height="8.4" fill="#1a9c78" stroke="#0a4838" stroke-width="0.8"/><circle cx="787.8" cy="272.45" r="1" fill="none" stroke="#0a4838" stroke-width="0.5"/></g><path d="M7.2 113.8h4.7l-2.35 3.7z" fill="#5a5a5a"/><rect x="17.2" y="111" width="7.8" height="8.6" fill="#e2e2e2" stroke="#d0d0d0" stroke-width="0.5"/><path d="M18.3 115.5l2.2-1.2 2.6 0.8v3.2l-2.4 1-2.4-0.9z" fill="#1c3aa8"/><path d="M18.3 115.5l2.2-1.2 2.6 0.8-2.4 1z" fill="#5a7ae0"/><path d="M20.5 113.5a2 1.6 0 0 1 3.6 0.5l-1 0.8z" fill="#e02020"/><path d="M28.3 124.3a4.2 1.8 0 0 1 8.4 0v6a4.2 1.8 0 0 1-8.4 0z" fill="#1c38a8"/><path d="M29.5 125v5.5" stroke="#4a6ee0" stroke-width="1.4"/><ellipse cx="32.5" cy="124.3" rx="4.2" ry="1.6" fill="#3a5cd0"/><path d="M36.5 124.5v6.3" stroke="#e82020" stroke-width="0.9"/><path d="M29 123.5h3" stroke="#e82020" stroke-width="0.8"/><path d="M28.4 136.8l2-2h6.199999999999999v5.9l-2 2h-6.199999999999999z" fill="#2448c0"/><path d="M28.4 136.8l2-2h6.199999999999999l-2 2z" fill="#102880" opacity="0.5"/><path d="M36.599999999999994 134.8v5.9l-2 2v-5.9z" fill="#102880"/><path d="M34.599999999999994 136.8v5.9M28.4 142.70000000000002h6.199999999999999" stroke="#e02020" stroke-width="0.9"/><path d="M29.6 147.8a3.4 1.5 0 0 1 6.8 0v6a3.4 1.5 0 0 1-6.8 0z" fill="#1a34a0"/><path d="M30.8 148.5v5.5" stroke="#4a6ee0" stroke-width="1.2"/><ellipse cx="33" cy="147.8" rx="3.4" ry="1.4" fill="#3a5cd0"/><path d="M33 149.5v5.2" stroke="#e02020" stroke-width="0.8"/><path d="M28.7 161l2-2h5.9v5.2l-2 2h-5.9z" fill="#8a8a8a"/><path d="M28.7 161l2-2h5.9l-2 2z" fill="#5a5a5a" opacity="0.5"/><path d="M36.6 159v5.2l-2 2v-5.2z" fill="#5a5a5a"/><path d="M28.7 184l2-2h5.9v5.2l-2 2h-5.9z" fill="#8a8a8a"/><path d="M28.7 184l2-2h5.9l-2 2z" fill="#5a5a5a" opacity="0.5"/><path d="M36.6 182v5.2l-2 2v-5.2z" fill="#5a5a5a"/><path d="M28.7 195.7l2-2h5.9v5.2l-2 2h-5.9z" fill="#8a8a8a"/><path d="M28.7 195.7l2-2h5.9l-2 2z" fill="#5a5a5a" opacity="0.5"/><path d="M36.6 193.7v5.2l-2 2v-5.2z" fill="#5a5a5a"/><path d="M28.7 207.5l2-2h5.9v5.2l-2 2h-5.9z" fill="#8a8a8a"/><path d="M28.7 207.5l2-2h5.9l-2 2z" fill="#5a5a5a" opacity="0.5"/><path d="M36.6 205.5v5.2l-2 2v-5.2z" fill="#5a5a5a"/><path d="M28.7 172l2-2h5.9v5.2l-2 2h-5.9z" fill="#b08878"/><path d="M28.7 172l2-2h5.9l-2 2z" fill="#806050" opacity="0.5"/><path d="M36.6 170v5.2l-2 2v-5.2z" fill="#806050"/><path d="M28.7 219.4l2-2h5.9v5.2l-2 2h-5.9z" fill="#1028e8"/><path d="M28.7 219.4l2-2h5.9l-2 2z" fill="#0010a0" opacity="0.5"/><path d="M36.6 217.4v5.2l-2 2v-5.2z" fill="#0010a0"/><path d="M152.5 57.5l3-3M153 54.5h2.5v2.5" fill="none" stroke="#888" stroke-width="0.6"/><path d="M162.8 54.3l3.4 3.4M166.2 54.3l-3.4 3.4" stroke="#7a7a7a" stroke-width="1"/><path d="M178.5 422.5h4.5v1.8h-2.7v1.5h2.2v1.7h-2.2v3.5h-1.8z" fill="#e02828"/><circle cx="184" cy="428" r="2.6" fill="none" stroke="#2050c8" stroke-width="1.6" stroke-dasharray="1.2 0.8"/><circle cx="184" cy="428" r="1.8" fill="none" stroke="#2050c8" stroke-width="1"/><path d="M302.2 425l5.6 5.6M307.8 425l-5.6 5.6" stroke="#585858" stroke-width="2"/><path d="M161.5 253.5l1.3-1.3 1.3 1.3" fill="none" stroke="#888" stroke-width="0.7"/><path d="M161.3 411.8h2.9l-1.45 1.4z" fill="#555"/></svg>
<!-- status -->
<div class="a" style="left:0;top:437px;width:800px;height:1px;background:#e3e2df"></div><div class="a" style="left:0;top:438px;width:800px;height:1px;background:#f7f6f5"></div>
<div class="a" style="left:797px;top:0;width:1px;height:456px;background:#f8f7f6"></div><div class="a" style="left:799px;top:0;width:1px;height:456px;background:#000"></div>
<div class="t" style="left:721.5px;top:441.5px;letter-spacing:-0.42px">128.04 x 77.81 mm</div>
</body></html>
